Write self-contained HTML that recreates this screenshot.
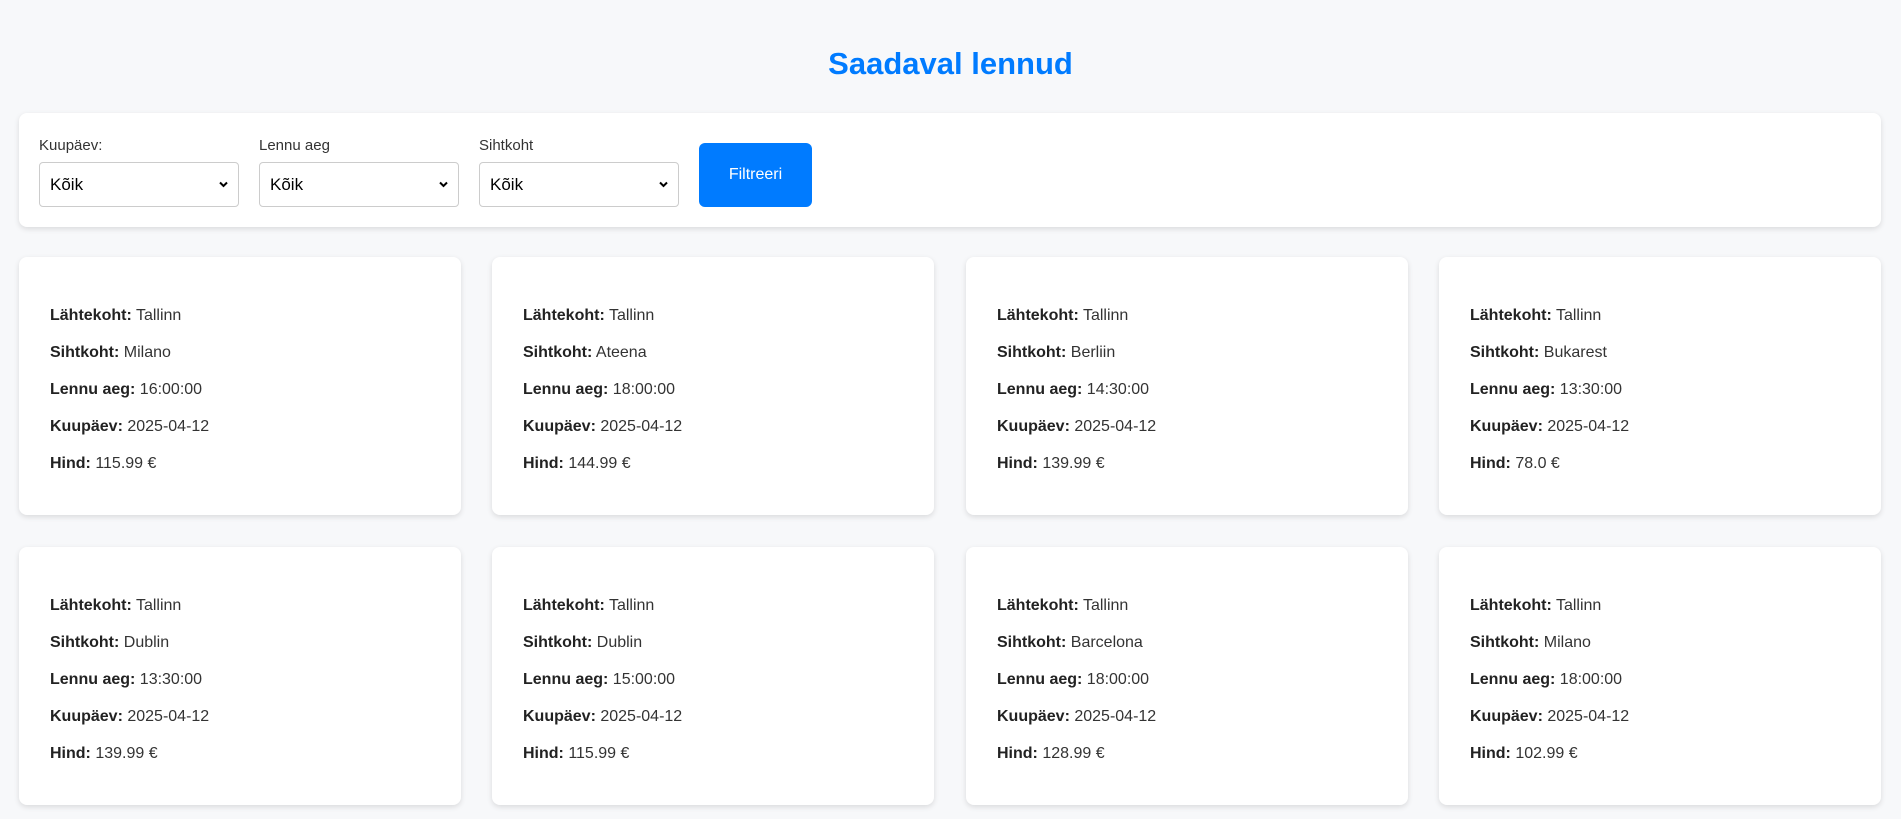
<!DOCTYPE html>
<html><head><meta charset="utf-8"><style>
body{margin:0;width:1901px;height:819px;background:#f7f8fa;font-family:"Liberation Sans",sans-serif;position:relative;overflow:hidden}
h1{position:absolute;left:0;width:1901px;top:44px;margin:0;text-align:center;color:#007bff;font-size:31px;font-weight:bold;line-height:40px}
.filter{position:absolute;left:19px;top:113px;width:1862px;height:114px;background:#fff;border-radius:8px;box-shadow:0 2px 6px rgba(0,0,0,.12)}
.lbl{position:absolute;top:137px;font-size:15px;color:#333}
.sel{position:absolute;top:162px;width:198px;height:43px;border:1px solid #ccc;border-radius:4px;background:#fff;font-size:17px;color:#000}
.sel span{position:absolute;left:10px;top:12px}
.sel svg{position:absolute;right:10px;top:18px}
.btn{position:absolute;left:699px;top:143px;width:113px;height:64px;background:#007bff;border-radius:6px;color:#fff;font-size:16px;text-align:center;line-height:64px}
.card{position:absolute;width:442px;height:258px;background:#fff;border-radius:8px;box-shadow:0 2px 6px rgba(0,0,0,.12);font-size:16px;color:#333}
.card p{margin:0;position:absolute;left:31px}
.card b{color:#222}
</style></head><body>
<h1>Saadaval lennud</h1>
<div class="filter"></div>
<div class="lbl" style="left:39px">Kuupäev:</div>
<div class="lbl" style="left:259px">Lennu aeg</div>
<div class="lbl" style="left:479px">Sihtkoht</div>
<div class="sel" style="left:39px"><span>Kõik</span><svg width="9" height="7" viewBox="0 0 9 7"><path d="M1 1.5L4.5 5L8 1.5" stroke="#000" stroke-width="2" fill="none"/></svg></div>
<div class="sel" style="left:259px"><span>Kõik</span><svg width="9" height="7" viewBox="0 0 9 7"><path d="M1 1.5L4.5 5L8 1.5" stroke="#000" stroke-width="2" fill="none"/></svg></div>
<div class="sel" style="left:479px"><span>Kõik</span><svg width="9" height="7" viewBox="0 0 9 7"><path d="M1 1.5L4.5 5L8 1.5" stroke="#000" stroke-width="2" fill="none"/></svg></div>
<div class="btn">Filtreeri</div>

<div class="card" style="left:19px;top:257px"><p style="top:50px"><b>Lähtekoht:</b> Tallinn</p><p style="top:87px"><b>Sihtkoht:</b> Milano</p><p style="top:124px"><b>Lennu aeg:</b> 16:00:00</p><p style="top:161px"><b>Kuupäev:</b> 2025-04-12</p><p style="top:198px"><b>Hind:</b> 115.99 €</p></div>
<div class="card" style="left:492px;top:257px"><p style="top:50px"><b>Lähtekoht:</b> Tallinn</p><p style="top:87px"><b>Sihtkoht:</b> Ateena</p><p style="top:124px"><b>Lennu aeg:</b> 18:00:00</p><p style="top:161px"><b>Kuupäev:</b> 2025-04-12</p><p style="top:198px"><b>Hind:</b> 144.99 €</p></div>
<div class="card" style="left:966px;top:257px"><p style="top:50px"><b>Lähtekoht:</b> Tallinn</p><p style="top:87px"><b>Sihtkoht:</b> Berliin</p><p style="top:124px"><b>Lennu aeg:</b> 14:30:00</p><p style="top:161px"><b>Kuupäev:</b> 2025-04-12</p><p style="top:198px"><b>Hind:</b> 139.99 €</p></div>
<div class="card" style="left:1439px;top:257px"><p style="top:50px"><b>Lähtekoht:</b> Tallinn</p><p style="top:87px"><b>Sihtkoht:</b> Bukarest</p><p style="top:124px"><b>Lennu aeg:</b> 13:30:00</p><p style="top:161px"><b>Kuupäev:</b> 2025-04-12</p><p style="top:198px"><b>Hind:</b> 78.0 €</p></div>

<div class="card" style="left:19px;top:547px"><p style="top:50px"><b>Lähtekoht:</b> Tallinn</p><p style="top:87px"><b>Sihtkoht:</b> Dublin</p><p style="top:124px"><b>Lennu aeg:</b> 13:30:00</p><p style="top:161px"><b>Kuupäev:</b> 2025-04-12</p><p style="top:198px"><b>Hind:</b> 139.99 €</p></div>
<div class="card" style="left:492px;top:547px"><p style="top:50px"><b>Lähtekoht:</b> Tallinn</p><p style="top:87px"><b>Sihtkoht:</b> Dublin</p><p style="top:124px"><b>Lennu aeg:</b> 15:00:00</p><p style="top:161px"><b>Kuupäev:</b> 2025-04-12</p><p style="top:198px"><b>Hind:</b> 115.99 €</p></div>
<div class="card" style="left:966px;top:547px"><p style="top:50px"><b>Lähtekoht:</b> Tallinn</p><p style="top:87px"><b>Sihtkoht:</b> Barcelona</p><p style="top:124px"><b>Lennu aeg:</b> 18:00:00</p><p style="top:161px"><b>Kuupäev:</b> 2025-04-12</p><p style="top:198px"><b>Hind:</b> 128.99 €</p></div>
<div class="card" style="left:1439px;top:547px"><p style="top:50px"><b>Lähtekoht:</b> Tallinn</p><p style="top:87px"><b>Sihtkoht:</b> Milano</p><p style="top:124px"><b>Lennu aeg:</b> 18:00:00</p><p style="top:161px"><b>Kuupäev:</b> 2025-04-12</p><p style="top:198px"><b>Hind:</b> 102.99 €</p></div>
</body></html>
